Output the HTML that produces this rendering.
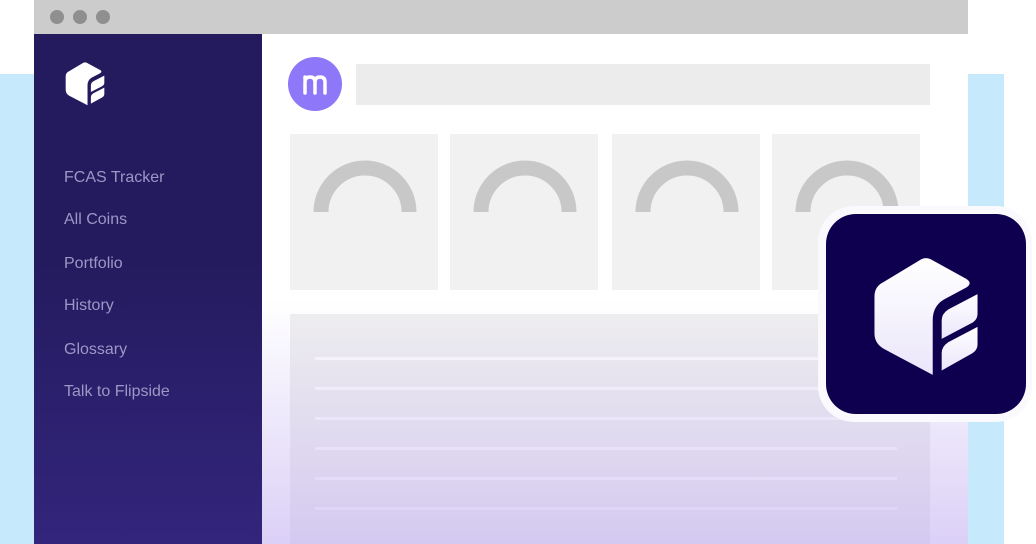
<!DOCTYPE html>
<html><head><style>
*{margin:0;padding:0;box-sizing:border-box}
body{width:1036px;height:544px;position:relative;overflow:hidden;background:#fff;font-family:"Liberation Sans",sans-serif}
.abs{position:absolute}
.nav{position:absolute;left:64px;color:#9c97c6;font-size:16px}
.card{position:absolute;top:134px;width:148px;height:156px;background:#f1f1f1}
.line{position:absolute;left:315px;width:582px;height:3px;background:#fff;opacity:.85}
</style></head><body>
<div class="abs" style="left:0;top:74px;width:1004px;height:470px;background:#c6e9fc"></div>
<div class="abs" style="left:34px;top:0;width:934px;height:34px;background:#cccccc"></div>
<div class="abs" style="left:50px;top:10px;width:14px;height:14px;border-radius:50%;background:#8f8f8f"></div>
<div class="abs" style="left:73px;top:10px;width:14px;height:14px;border-radius:50%;background:#8f8f8f"></div>
<div class="abs" style="left:96px;top:10px;width:14px;height:14px;border-radius:50%;background:#8f8f8f"></div>
<div class="abs" style="left:262px;top:34px;width:706px;height:510px;background:#fff"></div>
<div class="abs" style="left:34px;top:34px;width:228px;height:510px;background:linear-gradient(#241b5f 0%,#241b5f 45%,#33257c 100%)"></div>
<svg class="abs" style="left:64px;top:62px" width="42" height="44" viewBox="0 0 100 110" preserveAspectRatio="none"><g fill="#fff"><path d="M46 2 Q50 0 54 2 L86 20 Q92 24 86 28 L66 39 Q56 45 56 58 L56 108 L12 84 Q4 79 4 70 L4 36 Q4 27 12 23 Z"/><path d="M64 58 Q64 52 70 48 L96 34 L96 52 Q96 58 90 61 L64 75 Z"/><path d="M64 88 Q64 82 70 78 L96 64 L96 80 Q96 86 90 89 L64 104 Z"/></g></svg>
<div class="nav" style="top:169px">FCAS Tracker</div>
<div class="nav" style="top:211px">All Coins</div>
<div class="nav" style="top:255px">Portfolio</div>
<div class="nav" style="top:297px">History</div>
<div class="nav" style="top:341px">Glossary</div>
<div class="nav" style="top:383px">Talk to Flipside</div>
<div class="abs" style="left:288px;top:57px;width:54px;height:54px;border-radius:50%;background:#8e77f8"></div>
<svg class="abs" style="left:288px;top:57px" width="54" height="54" viewBox="0 0 54 54"><path d="M17 36 V25 Q17 20 22 20 Q27 20 27 25 V36 M27 25 Q27 20 32 20 Q37 20 37 25 V36 M17 22 V20" stroke="#fff" stroke-width="3.5" fill="none" stroke-linecap="round"/></svg>
<div class="abs" style="left:356px;top:64px;width:574px;height:41px;background:#ececec"></div>
<div class="card" style="left:290px"></div><div class="card" style="left:450px"></div><div class="card" style="left:612px"></div><div class="card" style="left:772px"></div>
<svg class="abs" style="left:0;top:0" width="1036" height="544"><g fill="none" stroke="#c8c8c8" stroke-width="15"><path d="M321 212 A44 44 0 0 1 409 212"/><path d="M481 212 A44 44 0 0 1 569 212"/><path d="M643 212 A44 44 0 0 1 731 212"/><path d="M803 212 A44 44 0 0 1 891 212"/></g></svg>
<div class="abs" style="left:290px;top:314px;width:640px;height:230px;background:#efefef"></div>
<div class="line" style="top:357px"></div><div class="line" style="top:387px"></div><div class="line" style="top:417px"></div><div class="line" style="top:447px"></div><div class="line" style="top:477px"></div><div class="line" style="top:507px"></div>
<div class="abs" style="left:262px;top:300px;width:706px;height:244px;background:linear-gradient(rgba(200,185,245,0) 0%,rgba(190,170,240,.55) 100%)"></div>
<div class="abs" style="left:818px;top:206px;width:214px;height:216px;border-radius:36px;background:#fafafe"></div>
<div class="abs" style="left:826px;top:214px;width:200px;height:200px;border-radius:30px;background:#0f004f"></div>
<svg class="abs" style="left:870px;top:257px" width="112" height="120" viewBox="0 0 100 110" preserveAspectRatio="none"><defs><linearGradient id="g" x1="0" y1="0" x2="0" y2="1"><stop offset="0" stop-color="#fff"/><stop offset="1" stop-color="#ebe6fb"/></linearGradient></defs><g fill="url(#g)"><path d="M46 2 Q50 0 54 2 L86 20 Q92 24 86 28 L66 39 Q56 45 56 58 L56 108 L12 84 Q4 79 4 70 L4 36 Q4 27 12 23 Z"/><path d="M64 58 Q64 52 70 48 L96 34 L96 52 Q96 58 90 61 L64 75 Z"/><path d="M64 88 Q64 82 70 78 L96 64 L96 80 Q96 86 90 89 L64 104 Z"/></g></svg>
</body></html>
